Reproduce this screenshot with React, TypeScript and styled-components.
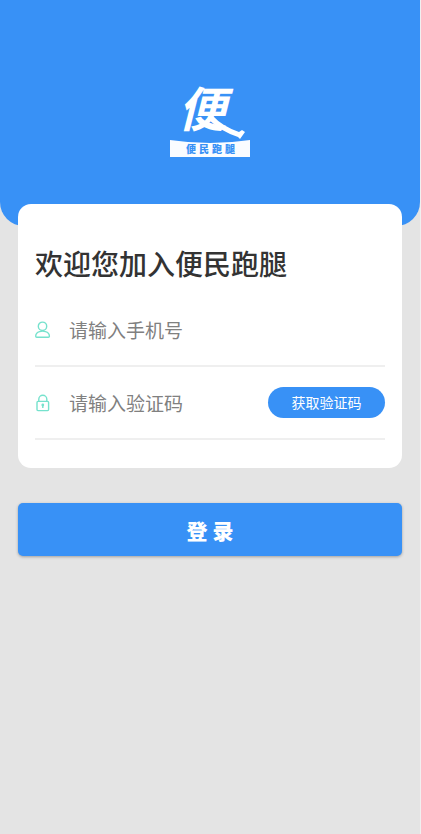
import React from "react";
import styled, { createGlobalStyle } from "styled-components";

const blue = "#3891f6";
const mint = "#76e2cd";

const GlobalStyle = createGlobalStyle`
  *, *::before, *::after { box-sizing: border-box; }
  html { background: #e4e4e4; }
  body {
    margin: 0;
    font-family: "Noto Sans CJK SC", "Noto Sans", sans-serif;
    color: #333;
  }
  button, input { font-family: inherit; }
`;

const Page = styled.div`
  min-height: 100vh;
  border-right: 1px solid #f0f0f0;
  background: #e4e4e4;
`;

const Header = styled.header`
  height: 226px;
  padding-top: 80px;
  display: flex;
  justify-content: center;
  align-items: flex-start;
  background: ${blue};
  border-radius: 0 0 24px 24px;
`;

const Logo = styled.svg`
  display: block;
  overflow: visible;
  width: 80px;
  height: 78px;
  font-family: "Noto Sans CJK SC", "Noto Sans", sans-serif;
`;

const Form = styled.form`
  position: relative;
  margin: -22px 18px 0;
`;

const Card = styled.section`
  padding: 39px 17px 28px;
  margin: 0 0 35px;
  background: #fff;
  border-radius: 13px;
`;

const Title = styled.h1`
  margin: 0 0 11px;
  font-size: 28px;
  line-height: 40px;
  font-weight: 500;
  white-space: nowrap;
`;

const Field = styled.div`
  display: flex;
  align-items: center;
  height: 73px;
  border-bottom: 2px solid #efefef;
`;

const FieldLabel = styled.label`
  display: flex;
  flex: none;
  width: 34px;
`;

const Input = styled.input`
  flex: 1;
  min-width: 0;
  height: 40px;
  padding: 0;
  border: 0;
  outline: 0;
  background: transparent;
  color: #333;
  font-size: 19px;
  line-height: 28px;
  &::placeholder { color: #808080; opacity: 1; }
`;

const CodeButton = styled.button`
  flex: none;
  width: 117px;
  height: 31px;
  padding: 0 0 2px;
  border: 0;
  border-radius: 16px;
  background: ${blue};
  color: #fff;
  font-size: 14px;
  line-height: 20px;
`;

const LoginButton = styled.button`
  display: block;
  width: 100%;
  height: 53px;
  padding: 0;
  border: 0;
  border-radius: 5px;
  background: ${blue};
  color: #fff;
  font-size: 21px;
  line-height: 28px;
  font-weight: 900;
  white-space: pre;
  box-shadow: 0 1px 3px rgba(0, 0, 0, 0.3);
`;

function UserIcon() {
  return (
    <svg width="16" height="18" viewBox="0 0 16 18" fill="none" stroke={mint} strokeWidth="1.4" aria-hidden="true">
      <circle cx="7.5" cy="5.3" r="4.2" />
      <path d="M4.6 10.6C2.2 11.3.7 13 .7 15.2c0 .7.4 1.1 1.1 1.1h11.5c.7 0 1.1-.4 1.1-1.1 0-2.2-1.5-3.9-3.9-4.6-1.7-.5-4.2-.5-5.900 0z" />
    </svg>
  );
}

function LockIcon() {
  return (
    <svg width="16" height="18" viewBox="0 0 16 18" fill="none" stroke={mint} strokeWidth="1.4" aria-hidden="true">
      <rect x="2" y="7.4" width="11.6" height="9.2" rx="1" />
      <path d="M3.8 7.4V5.200a4 4 0 0 1 8 0v2.200" />
      <circle cx="7.8" cy="11" r="1.4" fill={mint} stroke="none" />
      <path d="M7.8 11v3" />
    </svg>
  );
}

export default function App() {
  return (
    <>
      <GlobalStyle />
      <Page>
        <Header>
          <Logo viewBox="0 0 80 78" role="img" aria-label="便民跑腿">
            <text x="8" y="47" fontSize="48" fontWeight="700" fontStyle="italic" fill="#fff">便</text>
            <path d="M43 36q9 10 26 16l3-2 3 2-5 7-2-2q-16-5-29-17z" fill="#fff" />
            <path d="M0 60q40 6 80 0v17H0z" fill="#fafcff" />
            <text x="16" y="73" fontSize="10" fontWeight="900" letterSpacing="3" fill={blue}>便民跑腿</text>
          </Logo>
        </Header>
        <Form onSubmit={(event) => event.preventDefault()}>
          <Card>
            <Title>欢迎您加入便民跑腿</Title>
            <Field>
              <FieldLabel htmlFor="phone" aria-label="手机号"><UserIcon /></FieldLabel>
              <Input id="phone" type="tel" placeholder="请输入手机号" />
            </Field>
            <Field>
              <FieldLabel htmlFor="code" aria-label="验证码"><LockIcon /></FieldLabel>
              <Input id="code" inputMode="numeric" placeholder="请输入验证码" />
              <CodeButton type="button">获取验证码</CodeButton>
            </Field>
          </Card>
          <LoginButton type="submit">登 录</LoginButton>
        </Form>
      </Page>
    </>
  );
}
